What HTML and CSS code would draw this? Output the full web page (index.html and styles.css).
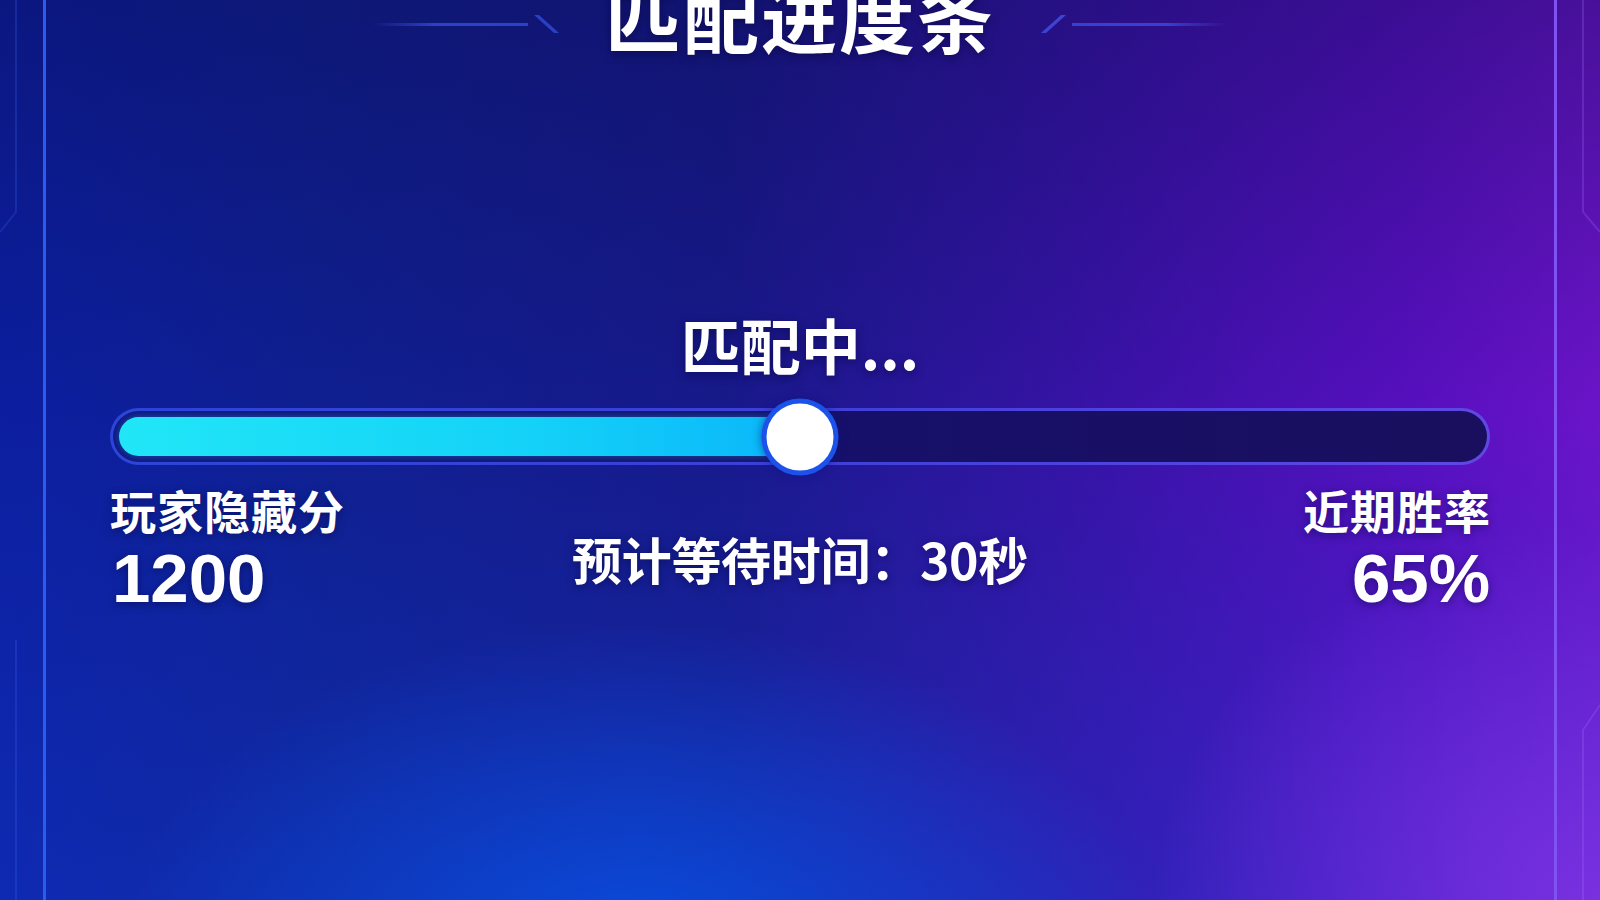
FILE: index.html
```html
<!DOCTYPE html>
<html lang="zh-CN">
<head>
    <meta charset="utf-8">
    <title>匹配进度条</title>
    <link rel="stylesheet" href="styles.css">
</head>
<body>
<svg class="frame" width="1600" height="900" viewBox="0 0 1600 900">
    <path class="frame-blue" d="M16 0 V212 L0 232"/>
    <path class="frame-blue" d="M16 900 V640"/>
    <path class="frame-purple" d="M1583 0 V212 L1600 232"/>
    <path class="frame-purple" d="M1583 900 V730 L1600 705"/>
</svg>
<main class="panel">
    <header class="title-row">
        <span class="deco deco-left"><i class="deco-line"></i><i class="deco-slash"></i></span>
        <h1>匹配进度条</h1>
        <span class="deco deco-right"><i class="deco-slash"></i><i class="deco-line"></i></span>
    </header>

    <div class="status">匹配中...</div>

    <div class="track">
        <div class="track-inner">
            <div class="fill" style="width: 50%"></div>
            <div class="knob" style="left: 50%"></div>
        </div>
    </div>

    <div class="stats">
        <div class="stat stat-left">
            <div class="label">玩家隐藏分</div>
            <div class="value">1200</div>
        </div>
        <div class="wait">预计等待时间：30秒</div>
        <div class="stat stat-right">
            <div class="label">近期胜率</div>
            <div class="value">65%</div>
        </div>
    </div>
</main>
</body>
</html>
```

FILE: styles.css
```css
body{
    margin: 0;
    width: 1600px;
    height: 900px;
    overflow: hidden;
    position: relative;
    color: #fff;
    font-family: "Noto Sans CJK SC", "Noto Sans", sans-serif;
    background:
        radial-gradient(ellipse 720px 460px at 40% 106%, rgba(8, 80, 228, 0.9), rgba(8, 80, 228, 0) 72%),
        radial-gradient(ellipse 620px 520px at 100% 100%, rgba(132, 52, 228, 0.8), rgba(132, 52, 228, 0) 72%),
        linear-gradient(180deg, rgba(10, 10, 70, 0.35) 0%, rgba(10, 10, 70, 0) 45%),
        linear-gradient(180deg, rgba(20, 70, 220, 0) 45%, rgba(20, 70, 220, 0.3) 100%),
        linear-gradient(90deg, #0c1ea0 0%, #0f1f90 20%, #17198a 45%, #3a12a8 70%, #560fbe 88%, #6a14c8 100%);
}

.frame{
    position: absolute;
    top: 0;
    left: 0;
    pointer-events: none;
}
.frame path{
    fill: none;
    stroke-width: 2;
}
.frame-blue{
    stroke: rgba(70, 110, 255, 0.22);
}
.frame-purple{
    stroke: rgba(160, 110, 255, 0.25);
}

.panel{
    box-sizing: border-box;
    height: 900px;
    margin: 0 43px;
    padding: 0 64px;
    border-left: 3px solid #2b5cf2;
    border-right: 3px solid #7f52f4;
    display: flex;
    flex-direction: column;
}

/* titulo */
.title-row{
    display: flex;
    justify-content: center;
    align-items: flex-start;
    gap: 56px;
    height: 76px;
    margin-top: -23px;
}
.title-row h1{
    margin: 0;
    font-size: 76px;
    line-height: 1;
    font-weight: 700;
    letter-spacing: 2px;
    text-shadow: 0 3px 10px rgba(5, 5, 60, 0.55);
}
.deco{
    display: flex;
    align-items: center;
    height: 18px;
    margin-top: 38px;
}
.deco-line{
    display: block;
    width: 156px;
    height: 3px;
}
.deco-left .deco-line{
    background: linear-gradient(90deg, rgba(40, 60, 200, 0), #2c40c8 40%, #2c40c8);
}
.deco-right .deco-line{
    background: linear-gradient(90deg, #3a3fd0, #3a3fd0 60%, rgba(60, 60, 210, 0));
}
.deco-slash{
    display: block;
    width: 5px;
    height: 18px;
}
.deco-left .deco-slash{
    background: #2a3fc4;
    transform: skewX(48deg);
    margin-left: 16px;
}
.deco-right .deco-slash{
    background: #3d44d4;
    transform: skewX(-48deg);
    margin-right: 16px;
}

/* estado */
.status{
    margin-top: 261px;
    text-align: center;
    font-size: 60px;
    line-height: 1;
    font-weight: 700;
    text-shadow: 0 3px 10px rgba(5, 5, 60, 0.5);
}

.track{
    box-sizing: border-box;
    height: 57px;
    margin-top: 34px;
    padding: 7px;
    border: 3px solid transparent;
    border-radius: 29px;
    background:
        linear-gradient(90deg, #101680, #17106a 55%, #1a0f5e) padding-box,
        linear-gradient(90deg, #2d44d8, #3f3fd8 50%, #5f48e4) border-box;
}
.track-inner{
    position: relative;
    margin: -1px -1px 0;
    height: 39px;
}
.fill{
    height: 100%;
    border-radius: 20px;
    background: linear-gradient(90deg, #21e6f7, #14d2f8 60%, #0ab6fa);
    box-shadow: 0 0 8px rgba(30, 210, 255, 0.35);
}
.knob{
    position: absolute;
    top: 50%;
    width: 67px;
    height: 67px;
    border-radius: 50%;
    background: #fff;
    border: 5px solid #1d52ea;
    transform: translate(-50%, -50%);
    box-shadow: 0 0 10px rgba(10, 20, 120, 0.6);
}

/* datos */
.stats{
    display: grid;
    grid-template-columns: 1fr auto 1fr;
    align-items: start;
    margin-top: 21px;
}
.stat{
    display: flex;
    flex-direction: column;
}
.stat-right{
    align-items: flex-end;
}
.label{
    font-size: 46px;
    line-height: 1;
    font-weight: 700;
    letter-spacing: 1px;
    text-shadow: 0 2px 8px rgba(5, 5, 60, 0.5);
}
.stat-right .label{
    margin-right: -1px;
}
.value{
    margin-top: 12px;
    font-family: "Liberation Sans", "Noto Sans", sans-serif;
    font-size: 69px;
    line-height: 1;
    font-weight: 700;
    text-shadow: 0 2px 8px rgba(5, 5, 60, 0.5);
}
.stat-left .value{
    margin-left: 2px;
}
.wait{
    padding-top: 47px;
    font-size: 50px;
    line-height: 1;
    font-weight: 700;
    letter-spacing: -0.3px;
    text-shadow: 0 2px 8px rgba(5, 5, 60, 0.5);
}
```
